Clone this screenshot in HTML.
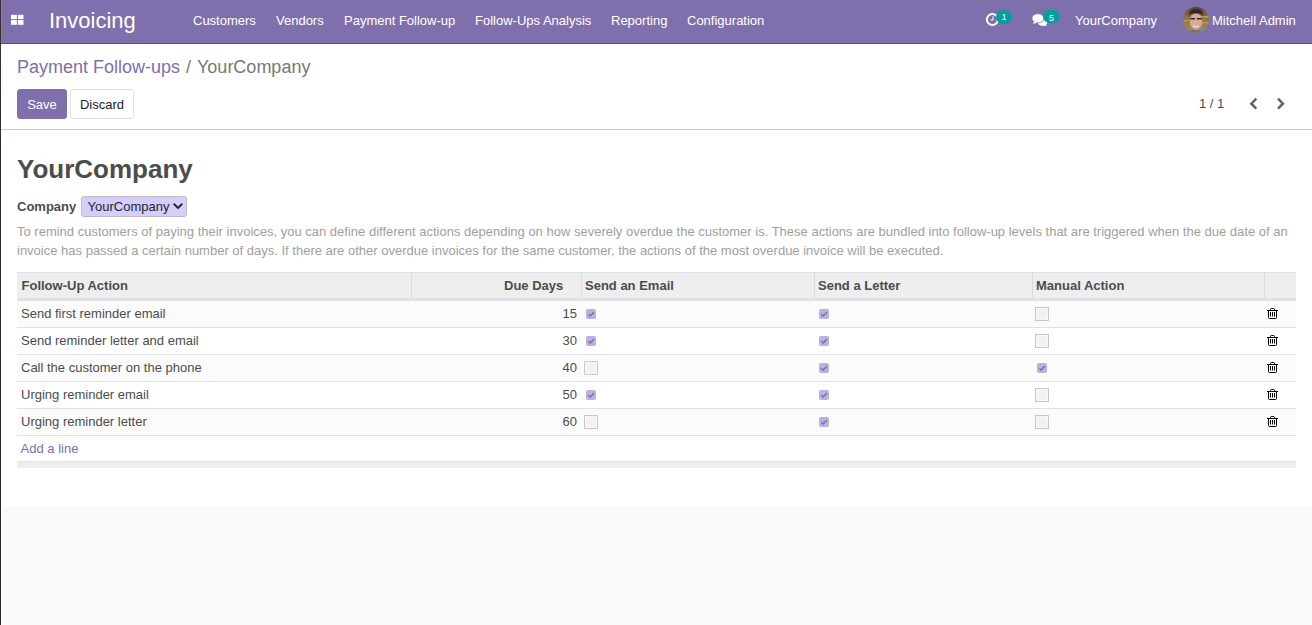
<!DOCTYPE html>
<html><head><meta charset="utf-8">
<style>
*{box-sizing:border-box;margin:0;padding:0}
html,body{width:1312px;height:625px;overflow:hidden;background:#f9f9f9}
body{font-family:"Liberation Sans",sans-serif;font-size:13px;color:#4c4c4c;position:relative}
.abs{position:absolute;white-space:nowrap}
#leftedge{position:absolute;left:0;top:0;width:1px;height:625px;background:linear-gradient(#3f332d 0,#382b2a 120px,#35272a 220px,#33252a 625px);z-index:10}
#leftw{position:absolute;left:1px;top:507px;width:1px;height:118px;background:#fff}
#leftn{position:absolute;left:1px;top:0;width:1px;height:43px;background:#8676b6;z-index:5}
#nav{position:absolute;left:0;top:0;width:1312px;height:44px;background:#7F6FAC;border-bottom:1px solid #5f4f94}
.nt{position:absolute;color:#fff;font-size:13px;line-height:20px;top:11px;white-space:nowrap}
#brand{position:absolute;color:#fff;font-size:22px;line-height:30px;top:6px;left:49px;white-space:nowrap}
#cp{position:absolute;left:0;top:44px;width:1312px;height:86px;background:#fff;border-bottom:1px solid #ccc}
#sheet{position:absolute;left:0;top:130px;width:1312px;height:377px;background:#fff}
.btn{position:absolute;top:89px;height:30px;border-radius:3px;font-size:13px;line-height:28px;padding-top:1px;text-align:center}
.cb-on{position:absolute;width:10px;height:10px;border-radius:2px;background:#bab1dc}
.cb-off{position:absolute;width:14px;height:14px;border:1px solid #c8c8c8;background:#f2f2f2;box-shadow:inset 0 0 0 1px #f8f8f8}
.row{position:absolute;left:17px;width:1279px;height:27px;border-bottom:1px solid #dee2e6}
.odd{background:#fbfbfb}
.cell{position:absolute;line-height:20px;top:3px;white-space:nowrap}
.th{position:absolute;font-weight:bold;line-height:20px;top:3px;white-space:nowrap}
.sep{position:absolute;top:0;width:1px;height:25px;background:#dcdcdc}
.trash{position:absolute}
</style></head>
<body>
<div id="leftedge"></div><div id="leftw"></div><div id="leftn"></div>
<div id="nav">
  <svg class="abs" style="left:11px;top:14px" width="13" height="12" viewBox="0 0 13 12"><rect x="0" y="0.8" width="5.9" height="4.3" fill="#fff"/><rect x="6.9" y="0.8" width="5.6" height="4.3" fill="#fff"/><rect x="0" y="6.1" width="5.9" height="4.7" fill="#fff"/><rect x="6.9" y="6.1" width="5.6" height="4.7" fill="#fff"/></svg>
  <div id="brand">Invoicing</div>
  <div class="nt" style="left:193px">Customers</div>
  <div class="nt" style="left:276px">Vendors</div>
  <div class="nt" style="left:344px">Payment Follow-up</div>
  <div class="nt" style="left:475px">Follow-Ups Analysis</div>
  <div class="nt" style="left:611px">Reporting</div>
  <div class="nt" style="left:687px">Configuration</div>
  <!-- clock -->
  <svg class="abs" style="left:985px;top:12px" width="16" height="16" viewBox="0 0 16 16"><circle cx="7.4" cy="7.5" r="5.5" fill="none" stroke="#fff" stroke-width="2"/><path d="M8 4.3V8H5.6" fill="none" stroke="#fff" stroke-width="1"/></svg>
  <div class="abs" style="left:996px;top:10px;width:16px;height:14px;border-radius:7px;background:#00a09d;color:#fff;font-size:9px;line-height:14px;text-align:center">1</div>
  <!-- chat -->
  <svg class="abs" style="left:1030px;top:12px" width="20" height="16" viewBox="0 0 20 16"><ellipse cx="12.6" cy="10.6" rx="4.8" ry="3.1" fill="#fff"/><path d="M14.5 12.4 L17.2 14.2 L12.2 13.6 Z" fill="#fff"/><ellipse cx="8" cy="6.3" rx="6.1" ry="4.6" fill="#fff" stroke="#7F6FAC" stroke-width="0.8"/><path d="M4 9.6 L3.2 11.9 L7.2 10.7 Z" fill="#fff"/></svg>
  <div class="abs" style="left:1043px;top:10px;width:17px;height:13px;border-radius:7px;background:#00a09d;color:#fff;font-size:9px;line-height:14px;padding-top:1px;text-align:center">5</div>
  <div class="nt" style="left:1075px">YourCompany</div>
  <svg class="abs" style="left:1183px;top:7px" width="26" height="26" viewBox="0 0 26 26"><defs><clipPath id="avc"><circle cx="13" cy="13" r="13"/></clipPath><linearGradient id="avg" x1="0" y1="0" x2="0" y2="1"><stop offset="0" stop-color="#4e3c2e"/><stop offset="0.35" stop-color="#8a7044"/><stop offset="1" stop-color="#a68a56"/></linearGradient></defs><g clip-path="url(#avc)"><rect width="26" height="26" fill="url(#avg)"/><rect x="18" y="9" width="8" height="1.5" fill="#b89a60"/><rect x="18" y="15" width="8" height="1.5" fill="#b39658"/><rect x="0" y="13" width="6" height="1.5" fill="#b09458"/><ellipse cx="19" cy="26" rx="9" ry="5" fill="#7f8a8a"/><ellipse cx="13" cy="14.5" rx="6.3" ry="8.2" fill="#d9a892"/><path d="M5.6 10 Q5.5 2.5 13 2 Q20.5 2.3 20.3 10 L19 7.3 Q13 5.3 7 7.2 Z" fill="#32262a"/><path d="M7.3 11.8 H11.8 M13.8 11.8 H18.8" stroke="#2f2a2a" stroke-width="1.6"/><path d="M10 18.8 Q13 20.6 16 18.8" stroke="#f3e2da" stroke-width="1.3" fill="none"/><ellipse cx="11" cy="26" rx="8" ry="3" fill="#6e7674"/></g></svg>
  <div class="nt" style="left:1212px">Mitchell Admin</div>
</div>
<div id="cp">
  <div class="abs" style="left:17px;top:10px;font-size:18px;line-height:26px;color:#7C6FAC">Payment Follow-ups</div>
  <div class="abs" style="left:186px;top:10px;font-size:18px;line-height:26px;color:#777">/</div>
  <div class="abs" style="left:197px;top:10px;font-size:18px;line-height:26px;color:#777">YourCompany</div>
</div>
<div class="btn" style="left:17px;width:50px;background:#7F6FAC;border:1px solid #7F6FAC;color:#fff">Save</div>
<div class="btn" style="left:70px;width:64px;background:#fff;border:1px solid #dee2e6;color:#212529">Discard</div>
<div class="abs" style="left:1199px;top:94px;line-height:20px;color:#4c4c4c">1 / 1</div>
<svg class="abs" style="left:1245px;top:94px" width="18" height="20" viewBox="0 0 18 20"><path d="M11.3 4.7 L6.4 9.65 L11.3 14.6" fill="none" stroke="#666" stroke-width="2.6"/></svg>
<svg class="abs" style="left:1272px;top:94px" width="18" height="20" viewBox="0 0 18 20"><path d="M6 4.7 L10.9 9.65 L6 14.6" fill="none" stroke="#666" stroke-width="2.6"/></svg>

<div id="sheet"></div>
<div class="abs" style="left:17px;top:153px;font-size:26px;line-height:32px;font-weight:bold;color:#4c4c4c">YourCompany</div>
<div class="abs" style="left:17px;top:197px;font-weight:bold;line-height:20px;color:#4c4c4c">Company</div>
<div class="abs" style="left:81px;top:196px;width:106px;height:21px;background:#d5ccff;border:1px solid #bcbcbc;border-radius:3px"></div>
<div class="abs" style="left:87.5px;top:197px;line-height:20px;color:#212529">YourCompany</div>
<svg class="abs" style="left:172px;top:201px" width="12" height="10" viewBox="0 0 12 10"><path d="M1.7 2.8 L6 6.9 L10.3 2.8" fill="none" stroke="#222" stroke-width="1.9"/></svg>
<div class="abs" style="left:17px;top:222px;line-height:19px;color:#a0a0a0;white-space:normal;width:1280px">To remind customers of paying their invoices, you can define different actions depending on how severely overdue the customer is. These actions are bundled into follow-up levels that are triggered when the due date of an invoice has passed a certain number of days. If there are other overdue invoices for the same customer, the actions of the most overdue invoice will be executed.</div>

<!-- table -->
<div class="abs" style="left:17px;top:272px;width:1279px;height:29px;background:#eee;border-top:1px solid #dee2e6;border-bottom:3px solid #dee2e6">
  <div class="th" style="left:4.5px">Follow-Up Action</div>
  <div class="sep" style="left:394px"></div>
  <div class="th" style="left:487px">Due Days</div>
  <div class="sep" style="left:564px"></div>
  <div class="th" style="left:568px">Send an Email</div>
  <div class="sep" style="left:797px"></div>
  <div class="th" style="left:801px">Send a Letter</div>
  <div class="sep" style="left:1015px"></div>
  <div class="th" style="left:1019px">Manual Action</div>
  <div class="sep" style="left:1247px"></div>
</div>
<div class="row odd" style="top:301px"><div class="cell" style="left:4px">Send first reminder email</div><div class="cell" style="right:719px">15</div><div class="cb-on" style="left:569px;top:8px"><svg width="10" height="10" viewBox="0 0 10 10" style="position:absolute;left:0;top:0"><path d="M2.3 5.2L4.2 7L7.8 3.3" fill="none" stroke="#7c6bb0" stroke-width="1.5"/></svg></div><div class="cb-on" style="left:802px;top:8px"><svg width="10" height="10" viewBox="0 0 10 10" style="position:absolute;left:0;top:0"><path d="M2.3 5.2L4.2 7L7.8 3.3" fill="none" stroke="#7c6bb0" stroke-width="1.5"/></svg></div><div class="cb-off" style="left:1018px;top:6px"></div><svg class="trash" style="left:1250px;top:6px" width="12" height="13" viewBox="0 0 12 13"><path d="M3.5 3.5V2.5Q3.5 1.5 4.5 1.5H6.5Q7.5 1.5 7.5 2.5V3.5" fill="none" stroke="#000" stroke-width="1"/><path d="M0 3.5H11" stroke="#000" stroke-width="1"/><path d="M1.5 3.5V10.5Q1.5 11.5 2.5 11.5H8.5Q9.5 11.5 9.5 10.5V3.5" fill="none" stroke="#000" stroke-width="1"/><path d="M3.5 5V9.5M5.5 5V9.5M7.5 5V9.5" stroke="#000" stroke-width="1"/></svg></div>
<div class="row" style="top:328px"><div class="cell" style="left:4px">Send reminder letter and email</div><div class="cell" style="right:719px">30</div><div class="cb-on" style="left:569px;top:8px"><svg width="10" height="10" viewBox="0 0 10 10" style="position:absolute;left:0;top:0"><path d="M2.3 5.2L4.2 7L7.8 3.3" fill="none" stroke="#7c6bb0" stroke-width="1.5"/></svg></div><div class="cb-on" style="left:802px;top:8px"><svg width="10" height="10" viewBox="0 0 10 10" style="position:absolute;left:0;top:0"><path d="M2.3 5.2L4.2 7L7.8 3.3" fill="none" stroke="#7c6bb0" stroke-width="1.5"/></svg></div><div class="cb-off" style="left:1018px;top:6px"></div><svg class="trash" style="left:1250px;top:6px" width="12" height="13" viewBox="0 0 12 13"><path d="M3.5 3.5V2.5Q3.5 1.5 4.5 1.5H6.5Q7.5 1.5 7.5 2.5V3.5" fill="none" stroke="#000" stroke-width="1"/><path d="M0 3.5H11" stroke="#000" stroke-width="1"/><path d="M1.5 3.5V10.5Q1.5 11.5 2.5 11.5H8.5Q9.5 11.5 9.5 10.5V3.5" fill="none" stroke="#000" stroke-width="1"/><path d="M3.5 5V9.5M5.5 5V9.5M7.5 5V9.5" stroke="#000" stroke-width="1"/></svg></div>
<div class="row odd" style="top:355px"><div class="cell" style="left:4px">Call the customer on the phone</div><div class="cell" style="right:719px">40</div><div class="cb-off" style="left:567px;top:6px"></div><div class="cb-on" style="left:802px;top:8px"><svg width="10" height="10" viewBox="0 0 10 10" style="position:absolute;left:0;top:0"><path d="M2.3 5.2L4.2 7L7.8 3.3" fill="none" stroke="#7c6bb0" stroke-width="1.5"/></svg></div><div class="cb-on" style="left:1020px;top:8px"><svg width="10" height="10" viewBox="0 0 10 10" style="position:absolute;left:0;top:0"><path d="M2.3 5.2L4.2 7L7.8 3.3" fill="none" stroke="#7c6bb0" stroke-width="1.5"/></svg></div><svg class="trash" style="left:1250px;top:6px" width="12" height="13" viewBox="0 0 12 13"><path d="M3.5 3.5V2.5Q3.5 1.5 4.5 1.5H6.5Q7.5 1.5 7.5 2.5V3.5" fill="none" stroke="#000" stroke-width="1"/><path d="M0 3.5H11" stroke="#000" stroke-width="1"/><path d="M1.5 3.5V10.5Q1.5 11.5 2.5 11.5H8.5Q9.5 11.5 9.5 10.5V3.5" fill="none" stroke="#000" stroke-width="1"/><path d="M3.5 5V9.5M5.5 5V9.5M7.5 5V9.5" stroke="#000" stroke-width="1"/></svg></div>
<div class="row" style="top:382px"><div class="cell" style="left:4px">Urging reminder email</div><div class="cell" style="right:719px">50</div><div class="cb-on" style="left:569px;top:8px"><svg width="10" height="10" viewBox="0 0 10 10" style="position:absolute;left:0;top:0"><path d="M2.3 5.2L4.2 7L7.8 3.3" fill="none" stroke="#7c6bb0" stroke-width="1.5"/></svg></div><div class="cb-on" style="left:802px;top:8px"><svg width="10" height="10" viewBox="0 0 10 10" style="position:absolute;left:0;top:0"><path d="M2.3 5.2L4.2 7L7.8 3.3" fill="none" stroke="#7c6bb0" stroke-width="1.5"/></svg></div><div class="cb-off" style="left:1018px;top:6px"></div><svg class="trash" style="left:1250px;top:6px" width="12" height="13" viewBox="0 0 12 13"><path d="M3.5 3.5V2.5Q3.5 1.5 4.5 1.5H6.5Q7.5 1.5 7.5 2.5V3.5" fill="none" stroke="#000" stroke-width="1"/><path d="M0 3.5H11" stroke="#000" stroke-width="1"/><path d="M1.5 3.5V10.5Q1.5 11.5 2.5 11.5H8.5Q9.5 11.5 9.5 10.5V3.5" fill="none" stroke="#000" stroke-width="1"/><path d="M3.5 5V9.5M5.5 5V9.5M7.5 5V9.5" stroke="#000" stroke-width="1"/></svg></div>
<div class="row odd" style="top:409px"><div class="cell" style="left:4px">Urging reminder letter</div><div class="cell" style="right:719px">60</div><div class="cb-off" style="left:567px;top:6px"></div><div class="cb-on" style="left:802px;top:8px"><svg width="10" height="10" viewBox="0 0 10 10" style="position:absolute;left:0;top:0"><path d="M2.3 5.2L4.2 7L7.8 3.3" fill="none" stroke="#7c6bb0" stroke-width="1.5"/></svg></div><div class="cb-off" style="left:1018px;top:6px"></div><svg class="trash" style="left:1250px;top:6px" width="12" height="13" viewBox="0 0 12 13"><path d="M3.5 3.5V2.5Q3.5 1.5 4.5 1.5H6.5Q7.5 1.5 7.5 2.5V3.5" fill="none" stroke="#000" stroke-width="1"/><path d="M0 3.5H11" stroke="#000" stroke-width="1"/><path d="M1.5 3.5V10.5Q1.5 11.5 2.5 11.5H8.5Q9.5 11.5 9.5 10.5V3.5" fill="none" stroke="#000" stroke-width="1"/><path d="M3.5 5V9.5M5.5 5V9.5M7.5 5V9.5" stroke="#000" stroke-width="1"/></svg></div>
<div class="row" style="top:436px;border-bottom:none"><div class="cell" style="left:3.6px;color:#7C6FAC">Add a line</div></div>
<div class="abs" style="left:17px;top:461px;width:1279px;height:7px;background:#eee;border-top:1px solid #dee2e6"></div>
</body></html>
